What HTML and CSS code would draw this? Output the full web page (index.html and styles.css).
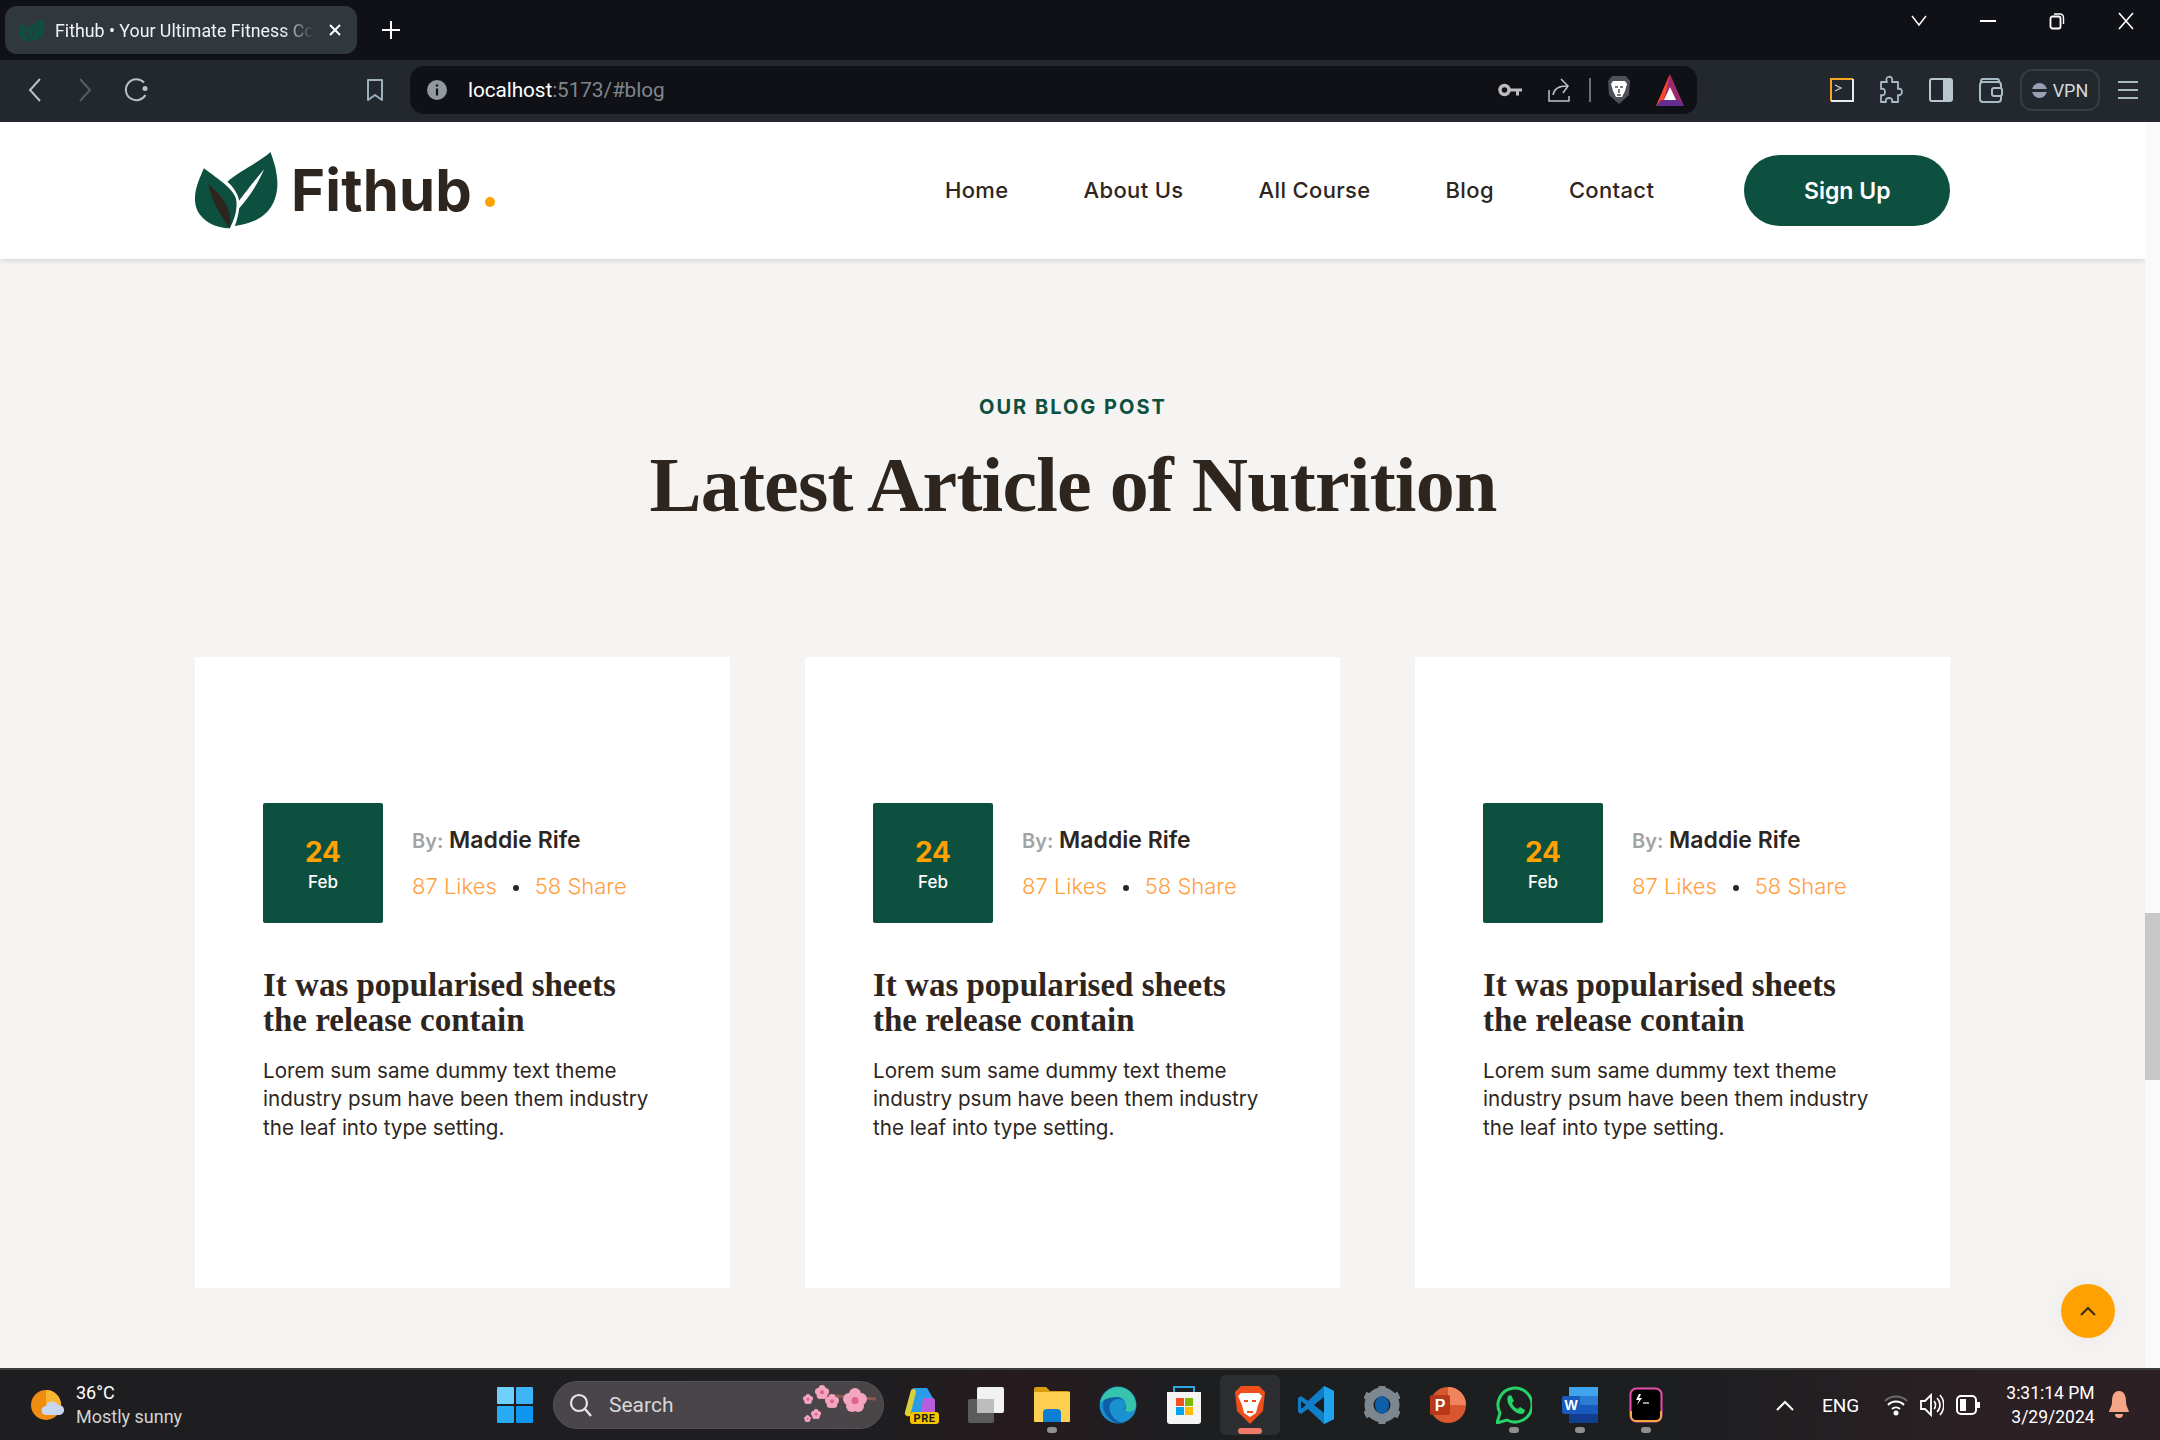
FILE: index.html
```html
<!DOCTYPE html>
<html lang="en">
<head>
<meta charset="utf-8">
<title>Fithub</title>
<link rel="stylesheet" href="styles.css">
</head>
<body>
<svg class="defs" width="0" height="0" aria-hidden="true">
  <symbol id="leaf" viewBox="40 60 260 240">
    <path fill="#0e5040" d="M72 115C105 140 160 175 168 205C175 235 165 265 150 295C110 295 65 275 50 235C35 190 60 145 72 115Z"/>
    <path fill="currentColor" d="M85 162C125 195 160 235 150 295C125 262 95 212 85 162Z"/>
    <path fill="#0e5040" d="M272 66C240 95 175 125 143 155C165 175 175 195 178 212C195 190 225 150 253 118C235 160 205 205 178 235C175 260 170 275 165 288C220 280 275 260 290 190C300 140 280 90 272 66Z"/>
  </symbol>
  <symbol id="flower" viewBox="0 0 24 24">
    <g fill="#f4a6c0"><circle cx="12" cy="6" r="6"/><circle cx="18" cy="11" r="6"/><circle cx="15" cy="18" r="6"/><circle cx="9" cy="18" r="6"/><circle cx="6" cy="11" r="6"/></g>
    <circle cx="12" cy="12.500" r="3.500" fill="#e0628f"/>
  </symbol>
</svg>
<div class="window">
  <header class="tabstrip">
    <div class="tab">
      <svg class="favicon" width="26" height="24"><use href="#leaf"/></svg>
      <span class="tab-title">Fithub • Your Ultimate Fitness Co</span>
      <svg width="14" height="14" viewBox="0 0 14 14"><path d="M2 2l10 10M12 2L2 12" stroke="#fff" stroke-width="2"/></svg>
    </div>
    <svg class="newtab" width="20" height="20" viewBox="0 0 20 20"><path d="M10 1v18M1 10h18" stroke="#fff" stroke-width="2"/></svg>
    <div class="winctl">
      <svg width="16" height="12" viewBox="0 0 16 12"><path d="M1 1l7 9 7-9" fill="none" stroke="#fff" stroke-width="1.5"/></svg>
      <svg width="16" height="12" viewBox="0 0 16 12"><path d="M0 6h16" stroke="#fff" stroke-width="2"/></svg>
      <svg width="16" height="18" viewBox="0 0 16 18"><rect x="1.500" y="4.500" width="10" height="12" rx="2" fill="none" stroke="#fff" stroke-width="1.800"/><path d="M5 2h6a3.500 3.500 0 0 1 3.500 3.500V12" fill="none" stroke="#fff" stroke-width="1.400"/></svg>
      <svg width="16" height="18" viewBox="0 0 16 18"><path d="M1 1l14 16M15 1L1 17" stroke="#fff" stroke-width="1.600"/></svg>
    </div>
  </header>

  <div class="toolbar">
    <div class="slot"><svg width="14" height="26" viewBox="0 0 14 26"><path d="M12 2L2 13l10 11" fill="none" stroke="#b9c1c7" stroke-width="2"/></svg></div>
    <div class="slot"><svg width="14" height="26" viewBox="0 0 14 26"><path d="M2 2l10 11L2 24" fill="none" stroke="#555c62" stroke-width="2"/></svg></div>
    <div class="slot slot-reload"><svg width="26" height="26" viewBox="0 0 26 26"><path d="M21 5.500A10.500 10.500 0 1 0 22.500 18" fill="none" stroke="#b9c1c7" stroke-width="2"/><circle cx="22" cy="11.500" r="2.500" fill="#b9c1c7"/></svg></div>
    <div class="slot slot-bookmark"><svg width="18" height="24" viewBox="0 0 18 24"><path d="M2 2h14v20l-7-5-7 5z" fill="none" stroke="#9fb0ba" stroke-width="2" stroke-linejoin="round"/></svg></div>
    <div class="address">
      <svg width="20" height="20" viewBox="0 0 20 20"><circle cx="10" cy="10" r="10" fill="#9298a0"/><path d="M10 4.500v2M10 8.500v7" stroke="#0f1116" stroke-width="2.200"/></svg>
      <div class="url"><span class="url-host">localhost</span>:5173/#blog</div>
      <div class="addr-actions">
        <svg width="24" height="16" viewBox="0 0 24 16"><circle cx="6.500" cy="8" r="4.500" fill="none" stroke="#bdbdbd" stroke-width="3.500"/><path d="M11 6.500h13v3h-3v4h-3v-4h-7z" fill="#bdbdbd"/></svg>
        <svg class="share" width="24" height="26" viewBox="0 0 24 26"><path d="M2 13v11h20v-5M6 18c1-7 6-9 14-9M14 2l7 7-5 7" fill="none" stroke="#bdc3c7" stroke-width="1.500"/></svg>
        <span class="addr-sep"></span>
        <svg class="lion" width="24" height="30" viewBox="0 0 24 30"><path d="M5 1h14l4 5-1 14-10 9-10-9L1 6z" fill="#4d5058"/><path d="M6 6h12l2 3-2 7-3 6h-6l-3-6-2-7z" fill="#fff"/><path d="M8 12h3M13 12h3M10 20h4M12 14v4" stroke="#4d5058" stroke-width="1.500"/></svg>
        <svg class="triangle" width="28" height="32" viewBox="0 0 28 32"><path d="M14 0L0 32h28z" fill="#9d2a6f"/><path d="M14 0L0 32l8-6z" fill="#ff4724"/><path d="M5 26h18l5 6H0z" fill="#662d91"/><path d="M14 13l6 13H8z" fill="#fff"/></svg>
      </div>
    </div>
    <div class="tool-actions">
      <div class="slot-sm slot-first"><svg width="24" height="24" viewBox="0 0 24 24"><path d="M1 23V1h22" fill="none" stroke="#f5a623" stroke-width="2"/><path d="M23 1v22H1" fill="none" stroke="#e8edf0" stroke-width="2"/><path d="M5 7l6 3-6 3" fill="none" stroke="#c6ccd0" stroke-width="1.300"/></svg></div>
      <div class="slot-sm"><svg width="24" height="30" viewBox="0 0 24 30"><path d="M9 2c3-1 5 1 4 5h6v7c3-1 4 1 4 3s-2 4-4 3v7h-6c1-3-1-4-3-4s-4 1-3 4H2v-7c3 1 4-1 4-3s-1-4-4-3V7h6C7 5 7 3 9 2z" fill="none" stroke="#a8bac4" stroke-width="1.800" stroke-linejoin="round"/></svg></div>
      <div class="slot-sm"><svg width="24" height="24" viewBox="0 0 24 24"><rect x="1" y="1" width="22" height="22" rx="2" fill="none" stroke="#b8c6cd" stroke-width="2"/><rect x="14" y="1" width="9" height="22" fill="#b8c6cd"/></svg></div>
      <div class="slot-sm"><svg width="24" height="26" viewBox="0 0 24 26"><rect x="1" y="5" width="21" height="20" rx="3" fill="none" stroke="#a8bac4" stroke-width="2"/><path d="M2 6V4a2 2 0 0 1 2-2h14a2 2 0 0 1 2 2v2" fill="none" stroke="#a8bac4" stroke-width="2"/><rect x="13" y="11" width="10" height="8" rx="2" fill="#22282d" stroke="#a8bac4" stroke-width="2"/></svg></div>
      <div class="vpn"><span class="vpn-dot"></span>VPN</div>
      <div class="slot-menu"><svg width="22" height="20" viewBox="0 0 22 20"><path d="M1 2h20M1 10h20M1 18h20" stroke="#a8bac4" stroke-width="1.800"/></svg></div>
    </div>
  </div>

  <div class="viewport">
    <div class="page">
      <nav class="site-nav">
        <a class="brand">
          <svg class="brand-mark" width="87" height="80"><use href="#leaf"/></svg>
          <span class="brand-name">Fithub<span class="brand-dot"></span></span>
        </a>
        <ul class="menu">
          <li>Home</li>
          <li>About Us</li>
          <li>All Course</li>
          <li>Blog</li>
          <li>Contact</li>
        </ul>
        <a class="signup">Sign Up</a>
      </nav>

      <section class="blog">
        <p class="eyebrow">OUR BLOG POST</p>
        <h1 class="blog-title">Latest Article of Nutrition</h1>
        <div class="cards">
          <article class="card">
            <div class="card-meta">
              <div class="date"><strong>24</strong><span>Feb</span></div>
              <div>
                <p class="author"><span>By:</span> Maddie Rife</p>
                <p class="stats">87 Likes<i></i>58 Share</p>
              </div>
            </div>
            <h2>It was popularised sheets the release contain</h2>
            <p class="excerpt">Lorem sum same dummy text theme industry psum have been them industry the leaf into type setting.</p>
          </article>
          <article class="card">
            <div class="card-meta">
              <div class="date"><strong>24</strong><span>Feb</span></div>
              <div>
                <p class="author"><span>By:</span> Maddie Rife</p>
                <p class="stats">87 Likes<i></i>58 Share</p>
              </div>
            </div>
            <h2>It was popularised sheets the release contain</h2>
            <p class="excerpt">Lorem sum same dummy text theme industry psum have been them industry the leaf into type setting.</p>
          </article>
          <article class="card">
            <div class="card-meta">
              <div class="date"><strong>24</strong><span>Feb</span></div>
              <div>
                <p class="author"><span>By:</span> Maddie Rife</p>
                <p class="stats">87 Likes<i></i>58 Share</p>
              </div>
            </div>
            <h2>It was popularised sheets the release contain</h2>
            <p class="excerpt">Lorem sum same dummy text theme industry psum have been them industry the leaf into type setting.</p>
          </article>
        </div>
      </section>
      <button class="to-top" aria-label="Back to top"><svg width="16" height="10" viewBox="0 0 16 10"><path d="M1 9l7-7 7 7" fill="none" stroke="#3a2a10" stroke-width="2"/></svg></button>
    </div>
    <div class="scrollbar"><div class="thumb"></div></div>
  </div>

  <footer class="taskbar">
    <div class="weather">
      <svg width="34" height="30" viewBox="0 0 34 30"><circle cx="15" cy="15" r="15" fill="#f08c12"/><path d="M15 0a15 15 0 0 1 15 15H15z" fill="#f7b733"/><path d="M15 25a4.500 4.500 0 0 1 0-9 6.500 6.500 0 0 1 12-1 5 5 0 0 1 2 10z" fill="#c9d6f0"/></svg>
      <div class="weather-text"><div>36°C</div><div class="weather-sub">Mostly sunny</div></div>
    </div>
    <div class="tb-slot"><svg width="36" height="36" viewBox="0 0 36 36"><rect width="17" height="17" rx="1" fill="#6fd0fc"/><rect x="19" width="17" height="17" rx="1" fill="#3db4f7"/><rect y="19" width="17" height="17" rx="1" fill="#28acf6"/><rect x="19" y="19" width="17" height="17" rx="1" fill="#0f96f0"/></svg></div>
    <div class="search">
      <svg width="24" height="24" viewBox="0 0 24 24"><circle cx="10" cy="10" r="8" fill="none" stroke="#e6e6e6" stroke-width="2.200"/><path d="M16 16l6 7" stroke="#e6e6e6" stroke-width="2.400"/></svg>
      <span>Search</span>
      <svg class="blossom" width="74" height="40" viewBox="0 0 74 40"><path d="M18 10l55 4" stroke="#8a5a50" stroke-width="3"/><use href="#flower" x="40" y="3" width="24" height="24"/><use href="#flower" x="22" y="9" width="14" height="14"/><use href="#flower" x="12" y="0" width="14" height="14"/><use href="#flower" x="0" y="9" width="10" height="10"/><use href="#flower" x="8" y="24" width="10" height="10"/><use href="#flower" x="1" y="30" width="7" height="7"/></svg>
    </div>
    <div class="tb-slot"><svg width="38" height="38" viewBox="0 0 38 38"><path d="M12 2h14l6 10v14H8z" fill="#2b9de8"/><path d="M10 4c2-2 5-1 5 2L9 30c-3 1-6-1-5-4z" fill="#d9cf3a"/><path d="M22 12h9c2 0 3 1 3 3v13H20z" fill="#b95de0"/><rect x="9" y="26" width="29" height="12" rx="3" fill="#f5c400"/><text class="pre" x="23.500" y="35.500">PRE</text></svg></div>
    <div class="tb-slot"><svg width="36" height="36" viewBox="0 0 36 36"><rect y="12" width="26" height="24" rx="2" fill="#5b5b5b"/><rect x="9" width="27" height="26" rx="2" fill="#f2f2f2"/><rect x="9" y="12" width="17" height="14" fill="#bdbdbd"/></svg></div>
    <div class="tb-slot tb-open"><svg width="36" height="36" viewBox="0 0 36 36"><path d="M0 2a2 2 0 0 1 2-2h10l4 4h18a2 2 0 0 1 2 2v4H0z" fill="#d99e0c"/><rect y="5" width="36" height="30" rx="1" fill="#fdd04f"/><path d="M9 35v-9a4 4 0 0 1 4-4h10a4 4 0 0 1 4 4v9z" fill="#0f7fd6"/></svg></div>
    <div class="tb-slot"><svg width="38" height="38" viewBox="0 0 38 38"><circle cx="19" cy="19" r="18.500" fill="#1a90d0"/><path d="M19 1a18 18 0 0 1 18 18c0 4-2 7-7 7-3 0-5-1-5-3 3-2 3-9-4-10C12 12 8 20 12 28c3 6 9 9 14 9A18 18 0 0 1 19 1z" fill="#0f5ea8"/><path d="M1 17C3 8 10 1 19 1c10 0 18 8 18 18 0 4-2 7-7 7-2 0-4-1-4-2 3-4 0-13-8-13-8 0-14 3-17 6z" fill="#36c4ae"/></svg></div>
    <div class="tb-slot"><svg width="36" height="38" viewBox="0 0 36 38"><path d="M8 6V1h20v5" fill="none" stroke="#29a7e1" stroke-width="2"/><path d="M1 6h34v29a3 3 0 0 1-3 3H4a3 3 0 0 1-3-3z" fill="#f4f4f4"/><rect x="10" y="12" width="8" height="8" fill="#f25022"/><rect x="19" y="12" width="8" height="8" fill="#7fba00"/><rect x="10" y="21" width="8" height="8" fill="#00a4ef"/><rect x="19" y="21" width="8" height="8" fill="#ffb900"/></svg></div>
    <div class="tb-slot tb-active"><svg width="32" height="38" viewBox="0 0 32 38"><path d="M7 0h18l6 6-2 19-13 13L3 25 1 6z" fill="#f04f1c"/><path d="M7 7h18l3 3-4 9-2 8-6 4-6-4-2-8-4-9z" fill="#fff"/><path d="M10 15h4M18 15h4M13 26h6" stroke="#f04f1c" stroke-width="2"/></svg></div>
    <div class="tb-slot"><svg width="36" height="38" viewBox="0 0 36 38"><path d="M26 0l10 5v28l-10 5-16-15-7 5-3-2V12l3-2 7 5z" fill="#0f7ec7"/><path d="M26 0l10 5v28l-10 5z" fill="#22a4ec"/><path d="M26 11v16l-10-8z" fill="#1c1d20"/><path d="M3 15l5 4-5 4z" fill="#1c1d20"/></svg></div>
    <div class="tb-slot"><svg width="36" height="38" viewBox="0 0 36 38"><circle cx="18" cy="19" r="13" fill="none" stroke="#7d8790" stroke-width="9"/><path d="M18 0v6M18 32v6M1 9l6 3M29 26l6 3M1 29l6-3M29 12l6-3" stroke="#7d8790" stroke-width="7"/><ellipse cx="18" cy="19" rx="7" ry="9" fill="#0f5ea8"/></svg></div>
    <div class="tb-slot"><svg width="36" height="36" viewBox="0 0 36 36"><circle cx="18" cy="18" r="18" fill="#d9572e"/><path d="M18 0a18 18 0 0 1 18 18H18z" fill="#f0845f"/><rect y="8" width="20" height="20" rx="2" fill="#b7381b"/><text class="ppt" x="10" y="24">P</text></svg></div>
    <div class="tb-slot tb-open"><svg width="36" height="38" viewBox="0 0 36 38"><path d="M1 37l3-10A17 17 0 1 1 11 34z" fill="none" stroke="#25d366" stroke-width="3"/><path d="M12 10l3-1 3 6-2 2c1 3 3 5 6 6l2-2 5 3-1 3c-2 2-7 1-11-3s-7-9-5-14z" fill="#25d366"/></svg></div>
    <div class="tb-slot tb-open"><svg width="36" height="36" viewBox="0 0 36 36"><rect x="7" width="29" height="36" rx="2" fill="#2b7cd3"/><rect x="7" width="29" height="9" fill="#41a5ee"/><rect x="7" y="18" width="29" height="9" fill="#185abd"/><rect x="7" y="27" width="29" height="9" fill="#103f91"/><rect y="9" width="18" height="18" rx="2" fill="#185abd"/><text class="word" x="9" y="23">W</text></svg></div>
    <div class="tb-slot tb-open"><svg width="34" height="36" viewBox="0 0 34 36"><rect x="1.500" y="1.500" width="31" height="33" rx="6" fill="#000" stroke="#e84fa8" stroke-width="2"/><path d="M2 24v5a5 5 0 0 0 5 5h20a5 5 0 0 0 5-5v-5" fill="none" stroke="#f5a742" stroke-width="2"/><path d="M10 7l-3 6h3l-2 5 5-7h-3l2-4z" fill="#fff"/><path d="M14 16h6" stroke="#ccc" stroke-width="1.500"/></svg></div>
    <div class="tray">
      <svg class="tray-chev" width="18" height="11" viewBox="0 0 18 11"><path d="M1 10l8-8 8 8" fill="none" stroke="#fff" stroke-width="2"/></svg>
      <span class="tray-lang">ENG</span>
      <svg class="tray-wifi" width="24" height="22" viewBox="0 0 24 22"><path d="M1 7a16 16 0 0 1 22 0" fill="none" stroke="#6c6c6c" stroke-width="2"/><path d="M4 11a11 11 0 0 1 16 0M8 15a6 6 0 0 1 8 0" fill="none" stroke="#fff" stroke-width="2"/><circle cx="12" cy="19" r="2.500" fill="#fff"/></svg>
      <svg class="tray-vol" width="24" height="24" viewBox="0 0 24 24"><path d="M1 8h4l6-6v20l-6-6H1z" fill="none" stroke="#fff" stroke-width="1.800"/><path d="M14 8c2 2 2 6 0 8M17 5c4 4 4 10 0 14M20 2c5 6 5 14 0 20" fill="none" stroke="#fff" stroke-width="1.600"/></svg>
      <svg class="tray-batt" width="24" height="20" viewBox="0 0 24 20"><rect x="1" y="1" width="19" height="18" rx="4" fill="none" stroke="#fff" stroke-width="2"/><rect x="4" y="4" width="6" height="12" fill="#fff"/><rect x="21" y="7" width="3" height="6" fill="#fff"/></svg>
      <div class="clock"><div>3:31:14 PM</div><div>3/29/2024</div></div>
      <svg class="tray-bell" width="20" height="28" viewBox="0 0 20 28"><path d="M10 0c6 0 7 6 7 11 0 4 3 8 3 10H0c0-2 3-6 3-10C3 6 4 0 10 0z" fill="#f7a587"/><path d="M6 23h8a4 4 0 0 1-8 0z" fill="#f7a587"/></svg>
    </div>
  </footer>
</div>
</body>
</html>
```
FILE: styles.css
```css
* { box-sizing: border-box; }
html, body { margin: 0; padding: 0; height: 100%; overflow: hidden; }
body { font-family: "Inter", "Liberation Sans", sans-serif; color: #2e261e; }
p, h1, h2, ul { margin: 0; padding: 0; }
.defs { display: block; height: 0; }
.window { display: flex; flex-direction: column; width: 2160px; height: 1440px; }

/* browser chrome */
.tabstrip { flex: 0 0 60px; display: flex; align-items: center; background: #0f1116; color: #fff; font-family: "Roboto", sans-serif; padding: 0 0 0 5px; }
.tab { width: 352px; height: 48px; border-radius: 12px; background: #30383e; display: flex; align-items: center; padding: 0 12px 0 14px; gap: 10px; font-size: 17.8px; }
.favicon { flex: none; color: #30383e; }
.tab-title { width: 258px; margin-right: 5px; white-space: nowrap; overflow: hidden; color: #f2f3f4; -webkit-mask-image: linear-gradient(90deg, #000 88%, transparent); mask-image: linear-gradient(90deg, #000 88%, transparent); }
.tab svg:last-child { flex: none; }
.newtab { margin: 0 0 0 24px; }
.winctl { display: flex; align-items: center; gap: 53px; margin: -18px 26px 0 auto; }
.toolbar { flex: 0 0 62px; display: flex; align-items: center; background: #22282d; padding-left: 10px; padding-bottom: 2px; }
.slot { width: 50px; display: flex; justify-content: center; }
.slot-reload { padding-left: 2px; }
.slot-bookmark { margin-left: 190px; }
.address { width: 1287px; height: 48px; margin-left: 10px; border-radius: 14px; background: #0f1116; display: flex; align-items: center; padding: 0 0 0 17px; }
.url { margin-left: 21px; font: 20.8px "Roboto", sans-serif; color: #7f868c; letter-spacing: -.1px; }
.url-host { color: #fff; }
.addr-actions { margin-left: auto; display: flex; align-items: center; padding-right: 13px; }
.share { margin-left: 25px; }
.addr-sep { width: 2px; height: 24px; background: #6a7075; margin-left: 18px; }
.lion { margin-left: 16px; }
.triangle { margin-left: 25px; }
.tool-actions { display: flex; align-items: center; margin-left: 121px; }
.slot-sm { width: 50px; display: flex; justify-content: center; }
.slot-first { width: 48px; }
.vpn { width: 80px; height: 42px; margin-left: 4px; border: 2px solid #353d43; border-radius: 12px; display: flex; align-items: center; justify-content: center; gap: 6px; color: #d5dade; font: 18px "Roboto", sans-serif; }
.vpn-dot { width: 15px; height: 15px; border-radius: 50%; background: linear-gradient(#9a9fb5 0 43%, #22282d 43% 57%, #9a9fb5 57%); }
.slot-menu { width: 56px; display: flex; justify-content: center; }

/* page */
.viewport { flex: 1; min-height: 0; display: flex; }
.page { flex: 1; position: relative; background: #f5f4f2; overflow: hidden; }
.scrollbar { flex: 0 0 15px; background: #fafafa; padding-top: 791px; }
.thumb { height: 167px; background: #c8c8c8; }

.site-nav { height: 137px; background: #fff; box-shadow: 0 1px 6px rgba(0,0,0,.16); display: flex; align-items: center; padding: 0 0 2px 193px; }
.brand { display: flex; align-items: center; width: 752px; }
.brand-mark { flex: none; }
.brand-name { margin-left: 11px; font-size: 58px; font-weight: 700; letter-spacing: .2px; line-height: 1; color: #2e261e; display: flex; align-items: flex-end; }
.brand-dot { width: 10px; height: 10px; margin: 0 0 12px 13px; border-radius: 50%; background: #ffa100; }
.menu { list-style: none; display: flex; gap: 75px; font-size: 22px; font-weight: 500; letter-spacing: .35px; }
.signup { margin-left: 90px; margin-top: 2px; width: 206px; height: 71px; border-radius: 36px; background: #0e5040; color: #fff; font-size: 23px; font-weight: 600; display: flex; align-items: center; justify-content: center; }

.blog { padding: 135px 0 0 195px; width: 1951px; }
.eyebrow { text-align: center; color: #0e5040; font-size: 20px; font-weight: 700; letter-spacing: 2px; line-height: 26px; }
.blog-title { text-align: center; margin-top: 20px; font: 700 78px/90px "Liberation Serif", serif; letter-spacing: -.8px; color: #2e261e; }
.cards { display: grid; grid-template-columns: repeat(3, 535px); gap: 75px; margin-top: 127px; }
.card { height: 631px; background: #fff; padding: 146px 68px 0; }
.card-meta { display: flex; align-items: center; gap: 29px; }
.date { width: 120px; height: 120px; border-radius: 2px; background: #0e5040; color: #fff; display: flex; flex-direction: column; align-items: center; justify-content: center; font-size: 17px; font-weight: 500; gap: 3px; }
.date strong { color: #ffa100; font-size: 28px; line-height: 34px; font-weight: 700; }
.author { font-size: 23px; font-weight: 600; line-height: 28px; color: #2e261e; }
.author span { color: #a3a3a3; font-size: 20px; }
.stats { margin-top: 17px; color: #ff9f3f; font-size: 22px; font-weight: 300; line-height: 28px; display: flex; align-items: center; }
.stats i { width: 6px; height: 6px; border-radius: 50%; background: #2e261e; margin: 3px 16px 0 16px; }
.card h2 { margin-top: 45px; font: 700 33px/34.5px "Liberation Serif", serif; color: #2e261e; width: 399px; }
.excerpt { margin-top: 20px; font-size: 20.6px; line-height: 28.3px; color: #2e261e; width: 399px; }
.to-top { position: absolute; left: 2061px; bottom: 30px; width: 54px; height: 54px; border: 0; border-radius: 50%; background: #ffa100; box-shadow: 0 0 30px rgba(0,0,0,.06); display: flex; align-items: center; justify-content: center; padding: 0; }

/* taskbar */
.taskbar { flex: 0 0 72px; display: flex; align-items: center; background: linear-gradient(90deg, #1e1e20 0 40%, #261b1f 47%, #1d1e20 55% 78%, #2b2024 92%, #2c2024); border-top: 2px solid #3c3c3c; color: #fff; font-family: "Roboto", sans-serif; font-size: 18px; }
.weather { width: 482px; display: flex; align-items: center; padding-left: 31px; gap: 11px; line-height: 24px; }
.weather-sub { color: #d3d3d3; }
.tb-slot { position: relative; width: 66px; height: 58px; border-radius: 6px; display: flex; align-items: center; justify-content: center; }
.tb-open::after, .tb-active::after { content: ""; position: absolute; left: 50%; bottom: 1px; width: 10px; height: 6px; margin-left: -5px; border-radius: 3px; background: #8f8f8f; }
.tb-active { background: #2c2e31; width: 60px; margin: 0 3px; height: 60px; }
.tb-active::after { width: 24px; margin-left: -12px; background: #ef7a68; }
.search { width: 331px; height: 48px; margin-left: 5px; border-radius: 24px; background: linear-gradient(90deg, #49454a, #48444a 70%, #4a4647); border: 1px solid #55525a; display: flex; align-items: center; padding-left: 15px; gap: 16px; color: #d8d8d8; font-size: 21px; margin-right: 3px; }
.blossom { margin-left: auto; margin-right: 6px; }
.pre { font: 700 11px "Roboto", sans-serif; fill: #1a1a1a; text-anchor: middle; letter-spacing: .6px; }
.ppt { font: 700 16px "Liberation Sans", sans-serif; fill: #fff; text-anchor: middle; }
.word { font: 700 14px "Liberation Sans", sans-serif; fill: #fff; text-anchor: middle; }
.tray { flex: 1; display: flex; align-items: center; padding-left: 97px; }
.tray-lang { margin-left: 28px; font-size: 19px; }
.tray-wifi { margin-left: 25px; }
.tray-vol { margin-left: 12px; }
.tray-batt { margin-left: 12px; }
.clock { margin-left: 26px; text-align: right; line-height: 24px; font-size: 17.5px; }
.tray-bell { margin-left: 14px; }
```
